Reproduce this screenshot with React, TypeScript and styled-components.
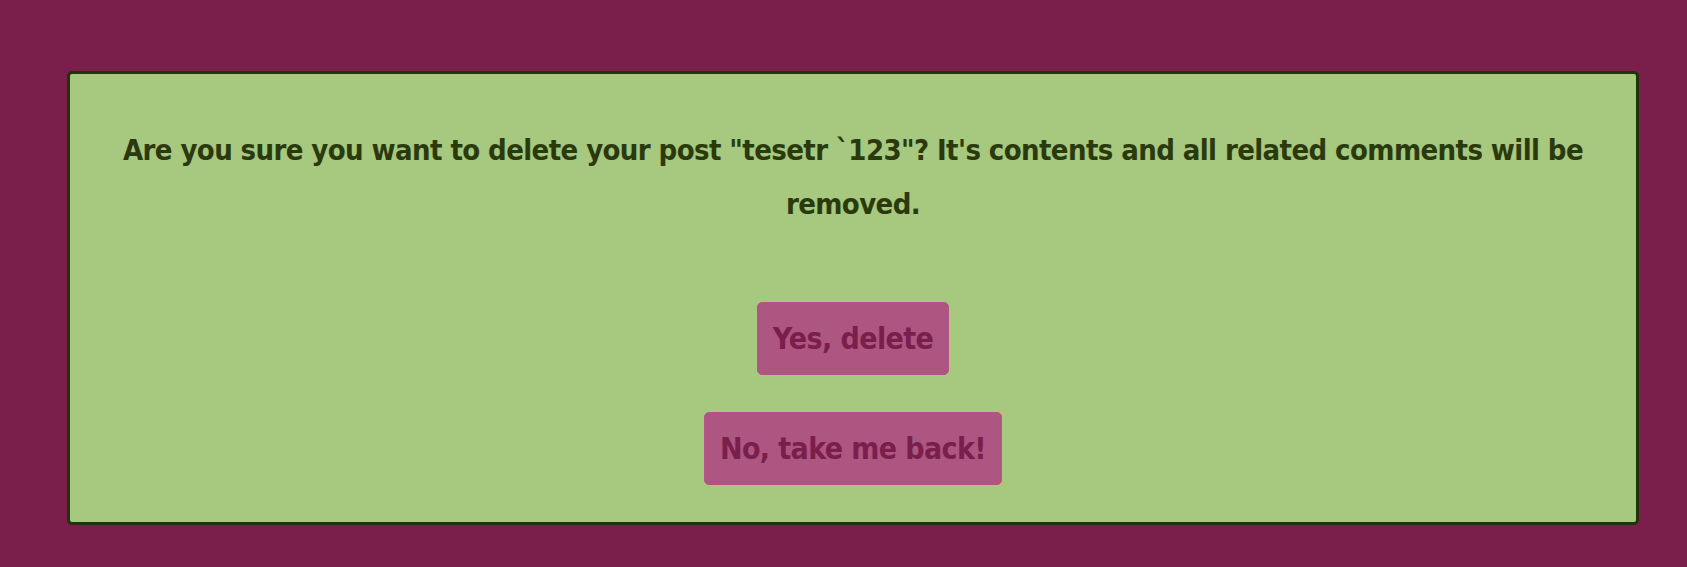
import React from "react";
import styled, { createGlobalStyle } from "styled-components";

const Global = createGlobalStyle`
  html, body {
    margin: 0;
    padding: 0;
    background: #7a1f4b;
  }
  * { box-sizing: border-box; }
`;

const Page = styled.main`
  min-height: 567px;
  padding: 71px 48px 0 67px;
  font-family: "DejaVu Sans Condensed", "DejaVu Sans", "Liberation Sans", sans-serif;
  font-stretch: condensed;
`;

const Card = styled.section`
  height: 454px;
  background: #a6c87f;
  border: 3px solid #1f3409;
  border-radius: 5px;
  padding: 49px 36px 0;
  display: flex;
  flex-direction: column;
  align-items: center;
`;

const Message = styled.h2`
  margin: 0 0 71px;
  font-size: 29px;
  letter-spacing: -0.6px;
  line-height: 54px;
  font-weight: 700;
  color: #2a3a0c;
  text-align: center;
`;

const Actions = styled.div`
  display: flex;
  flex-direction: column;
  align-items: center;
  gap: 37px;
`;

const Button = styled.button`
  font-family: inherit;
  font-stretch: condensed;
  font-size: 30px;
  letter-spacing: -0.6px;
  line-height: 54px;
  font-weight: 700;
  color: #7a1f4b;
  background: #ad5681;
  border: 1px solid #b9518a;
  border-radius: 5px;
  padding: 8.5px 15px;
  cursor: pointer;
`;

export default function App() {
  return (
    <>
      <Global />
      <Page>
        <Card>
          <Message>
            Are you sure you want to delete your post "tesetr `123"? It's contents and all related comments will be removed.
          </Message>
          <Actions>
            <Button>Yes, delete</Button>
            <Button>No, take me back!</Button>
          </Actions>
        </Card>
      </Page>
    </>
  );
}
